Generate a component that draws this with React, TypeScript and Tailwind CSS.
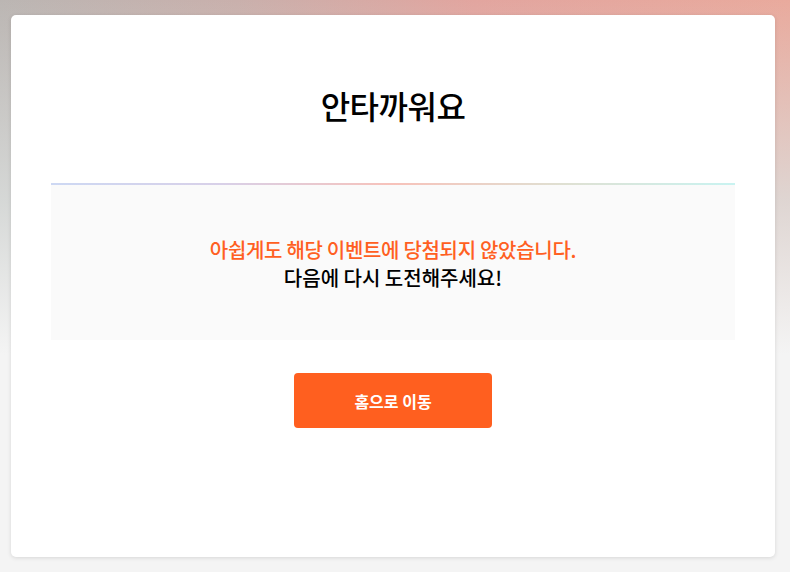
export default function App() {
  return (
    <div
      className="relative w-[790px] h-[572px] overflow-hidden bg-[#f4f4f4]"
      style={{ fontFamily: '"Noto Sans CJK KR", "Noto Sans", sans-serif' }}
    >
      <div className="absolute inset-0 bg-[linear-gradient(90deg,#bbb6b3_0%,#c9b0ac_30%,#e2a59f_60%,#e9aa9d_100%)]" />
      <div className="absolute inset-0 bg-[linear-gradient(180deg,rgba(244,244,244,0)_0%,rgba(220,224,223,0.8)_35%,#f4f4f4_62%,#f4f4f4_100%)]" />
      <div className="relative pt-[15px] pl-[11px]">
        <div className="w-[764px] h-[542px] bg-white rounded-[5px] shadow-[0_1px_4px_rgba(0,0,0,0.12)] px-[40px] pt-[66px] flex flex-col items-center">
          <h1 className="text-[32px] leading-[48px] font-medium text-black tracking-[-0.5px]">안타까워요</h1>
          <div className="mt-[54px] w-full h-[157px] bg-[#fafafa] relative flex flex-col items-center pt-[53px]">
            <div className="absolute top-0 left-0 right-0 h-[2px] bg-[linear-gradient(90deg,#cdd8f3_0%,#d8d0e8_25%,#f7c2ba_50%,#dfe0d2_75%,#c9f3f1_100%)]" />
            <p className="text-[20px] leading-[28px] font-medium text-[#ff5f22] tracking-[-0.3px]">아쉽게도 해당 이벤트에 당첨되지 않았습니다.</p>
            <p className="text-[20px] leading-[28px] font-medium text-black">다음에 다시 도전해주세요!</p>
          </div>
          <button className="mt-[33px] w-[198px] h-[55px] rounded-[4px] bg-[#ff5f1f] text-white text-[16px] font-bold">
            홈으로 이동
          </button>
        </div>
      </div>
    </div>
  );
}
